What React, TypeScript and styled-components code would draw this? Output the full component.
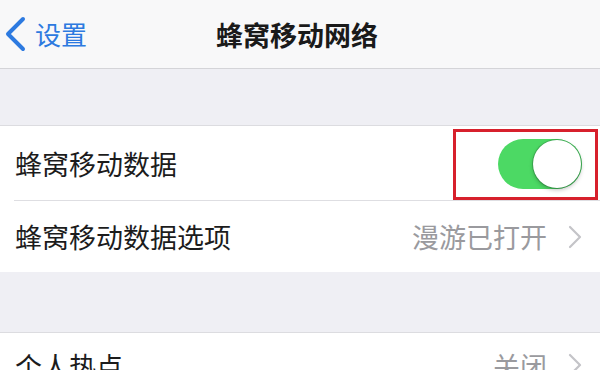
import React from "react";
import styled, { createGlobalStyle } from "styled-components";

const Global = createGlobalStyle`
  html, body { margin: 0; padding: 0; }
  body {
    width: 600px;
    height: 370px;
    overflow: hidden;
    background: #efeff4;
    font-family: "Noto Sans CJK SC", "Noto Sans", sans-serif;
  }
`;

const Page = styled.div`
  width: 600px;
  height: 370px;
  overflow: hidden;
  display: flex;
  flex-direction: column;
  background: #efeff4;
`;

const NavBar = styled.header`
  height: 68px;
  flex: none;
  background: #f8f8f9;
  border-bottom: 1px solid #d4d4d8;
  display: grid;
  grid-template-columns: 1fr auto 1fr;
  align-items: center;
`;

const BackButton = styled.div`
  display: flex;
  align-items: center;
  gap: 9px;
  padding-left: 4px;
  color: #2d7ae0;
  font-size: 26px;
  line-height: 1;
`;

const Title = styled.h1`
  margin: 0;
  font-size: 27px;
  font-weight: 700;
  color: #1a1a1a;
  line-height: 1;
  padding-right: 6px;
`;

const Spacer = styled.div<{ $h: number }>`
  height: ${(p) => p.$h}px;
  flex: none;
  border-bottom: 1px solid #dcdce0;
`;

const Group = styled.section`
  background: #fff;
  flex: none;
  display: flex;
  flex-direction: column;
`;

const Row = styled.div<{ $h: number; $sep?: boolean }>`
  position: relative;
  height: ${(p) => p.$h}px;
  display: flex;
  align-items: center;
  justify-content: space-between;
  padding: 0 18px 0 15px;
  box-sizing: border-box;
  &::after {
    content: "";
    display: ${(p) => (p.$sep ? "block" : "none")};
    position: absolute;
    left: 14px;
    right: 0;
    bottom: 0;
    height: 1px;
    background: #dedee2;
  }
`;

const Label = styled.span`
  font-size: 27px;
  color: #1c1c1c;
  line-height: 1;
`;

const Detail = styled.span`
  display: flex;
  align-items: center;
  gap: 21px;
  font-size: 27px;
  color: #9a9a9e;
  line-height: 1;
`;

const Toggle = styled.div`
  width: 84px;
  height: 50px;
  border-radius: 25px;
  background: #4cd964;
  display: flex;
  align-items: center;
  justify-content: flex-end;
  padding: 1px;
  box-sizing: border-box;
`;

const Knob = styled.div`
  width: 48px;
  height: 48px;
  border-radius: 50%;
  background: #fff;
  box-shadow: 0 2px 4px rgba(0, 0, 0, 0.25), 0 0 0 1px rgba(40, 120, 60, 0.4);
`;

const Highlight = styled.div`
  position: absolute;
  left: 453px;
  top: 3px;
  width: 145px;
  height: 71px;
  border: 3px solid #d7202c;
  box-sizing: border-box;
  pointer-events: none;
`;

const BackChevron = () => (
  <svg width="22" height="36" viewBox="0 0 22 36">
    <path d="M19 3 L4 18 L19 33" fill="none" stroke="#2d7ae0" strokeWidth="4" strokeLinecap="round" strokeLinejoin="round" />
  </svg>
);

const Chevron = () => (
  <svg width="14" height="24" viewBox="0 0 14 24">
    <path d="M2 2 L12 12 L2 22" fill="none" stroke="#c4c4c8" strokeWidth="2.2" strokeLinecap="round" strokeLinejoin="round" />
  </svg>
);

export default function App() {
  return (
    <Page>
      <Global />
      <NavBar>
        <BackButton>
          <BackChevron />
          设置
        </BackButton>
        <Title>蜂窝移动网络</Title>
        <div />
      </NavBar>
      <Spacer $h={56} />
      <Group>
        <Row $h={75} $sep>
          <Label>蜂窝移动数据</Label>
          <Toggle>
            <Knob />
          </Toggle>
          <Highlight />
        </Row>
        <Row $h={71}>
          <Label>蜂窝移动数据选项</Label>
          <Detail>
            漫游已打开
            <Chevron />
          </Detail>
        </Row>
      </Group>
      <Spacer $h={60} />
      <Group>
        <Row $h={64}>
          <Label>个人热点</Label>
          <Detail>
            关闭
            <Chevron />
          </Detail>
        </Row>
      </Group>
    </Page>
  );
}
